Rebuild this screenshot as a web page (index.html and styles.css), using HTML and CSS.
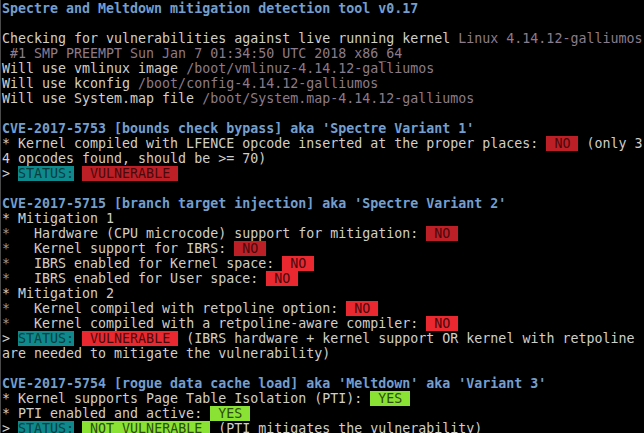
FILE: index.html
```html
<!DOCTYPE html>
<html>
<head>
<meta charset="utf-8">
<link rel="stylesheet" href="styles.css">
</head>
<body>
<div class="term">
<div class="ln"> </div>
<div class="ln hd">Spectre and Meltdown mitigation detection tool v0.17</div>
<div class="ln"> </div>
<div class="ln">Checking for vulnerabilities against live running kernel <span class="dim">Linux 4.14.12-galliumos</span></div>
<div class="ln dim"> #1 SMP PREEMPT Sun Jan 7 01:34:50 UTC 2018 x86_64</div>
<div class="ln">Will use vmlinux image <span class="dim">/boot/vmlinuz-4.14.12-galliumos</span></div>
<div class="ln">Will use kconfig <span class="dim">/boot/config-4.14.12-galliumos</span></div>
<div class="ln">Will use System.map file <span class="dim">/boot/System.map-4.14.12-galliumos</span></div>
<div class="ln"> </div>
<div class="ln hd">CVE-2017-5753 [bounds check bypass] aka 'Spectre Variant 1'</div>
<div class="ln">* Kernel compiled with LFENCE opcode inserted at the proper places: <span class="b red"> NO </span> (only 3</div>
<div class="ln">4 opcodes found, should be &gt;= 70)</div>
<div class="ln">&gt; <span class="b teal">STATUS:</span> <span class="b red"> VULNERABLE </span></div>
<div class="ln"> </div>
<div class="ln hd">CVE-2017-5715 [branch target injection] aka 'Spectre Variant 2'</div>
<div class="ln">* Mitigation 1</div>
<div class="ln"><span class="ast">*</span>   Hardware (CPU microcode) support for mitigation: <span class="b red"> NO </span></div>
<div class="ln"><span class="ast">*</span>   Kernel support for IBRS: <span class="b red"> NO </span></div>
<div class="ln"><span class="ast">*</span>   IBRS enabled for Kernel space: <span class="b hot"> NO </span></div>
<div class="ln"><span class="ast">*</span>   IBRS enabled for User space: <span class="b hot"> NO </span></div>
<div class="ln">* Mitigation 2</div>
<div class="ln"><span class="ast">*</span>   Kernel compiled with retpoline option: <span class="b hot"> NO </span></div>
<div class="ln"><span class="ast">*</span>   Kernel compiled with a retpoline-aware compiler: <span class="b hot"> NO </span></div>
<div class="ln">&gt; <span class="b teal">STATUS:</span> <span class="b hot"> VULNERABLE </span> (IBRS hardware + kernel support OR kernel with retpoline</div>
<div class="ln">are needed to mitigate the vulnerability)</div>
<div class="ln"> </div>
<div class="ln hd">CVE-2017-5754 [rogue data cache load] aka 'Meltdown' aka 'Variant 3'</div>
<div class="ln">* Kernel supports Page Table Isolation (PTI): <span class="b green"> YES </span></div>
<div class="ln">* PTI enabled and active: <span class="b green"> YES </span></div>
<div class="ln">&gt; <span class="b teal">STATUS:</span> <span class="b green"> NOT VULNERABLE </span> (PTI mitigates the vulnerability)</div>
</div>
</body>
</html>
```
FILE: styles.css
```css
html, body {
  margin: 0;
  padding: 0;
  background: #000;
  overflow: hidden;
}
.term {
  margin-top: -14px;
  border-left: 1px solid #4a4a4a;
  padding-left: 1px;
  height: 460px;
  font-family: "DejaVu Sans Mono", monospace;
  font-size: 13.3px;
  line-height: 15px;
  color: #cfcfcb;
}
.ln {
  height: 15px;
  white-space: pre;
}
.hd {
  color: #729fcf;
  font-weight: bold;
}
.dim {
  color: #8c7c8b;
}
.ast {
  color: #9a9a98;
}
.b {
  display: inline-block;
  height: 15px;
  line-height: 15px;
  vertical-align: top;
}
.red {
  background: #bd1f26;
  color: #4a0a0c;
}
.hot {
  background: #ea2830;
  color: #4a0a0c;
}
.teal {
  background: #0f8a8c;
  color: #063d3e;
}
.green {
  background: #8ae234;
  color: #2e4d10;
}
```
